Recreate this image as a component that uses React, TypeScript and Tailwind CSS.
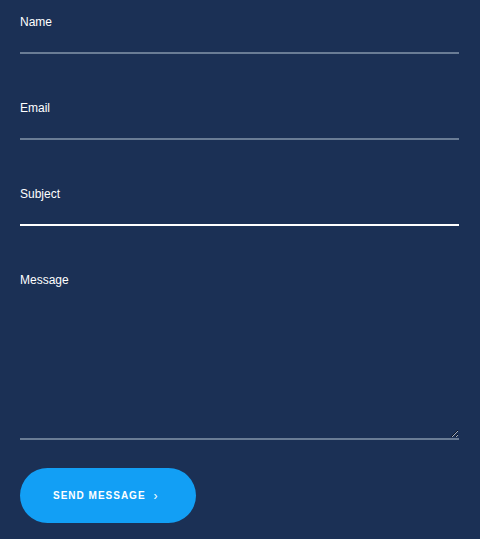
const FIELDS = ['Name', 'Email', 'Subject'];

export default function App() {
  return (
    <div className="min-h-[539px] bg-[#1b3055] px-5 pt-[14px] pb-4 font-['Liberation_Sans',Arial,sans-serif]">
      <form className="flex w-[439px] flex-col" onSubmit={(e) => e.preventDefault()}>
        {FIELDS.map((f) => (
          <label key={f} className="mb-[46px] flex flex-col">
            <span className="pt-px text-xs leading-[14px] text-white">{f}</span>
            <input
              className={
                'h-[25px] border-b-2 bg-transparent text-sm text-white outline-none ' +
                (f === 'Subject' ? 'border-white' : 'border-[#6a7c95]')
              }
            />
          </label>
        ))}
        <label className="flex flex-col">
          <span className="pt-px text-xs leading-[14px] text-white">Message</span>
          <textarea className="h-[153px] resize-y border-b-2 border-[#6a7c95] bg-transparent text-sm text-white outline-none" />
        </label>
        <button
          type="submit"
          className="mt-[28px] flex h-[55px] w-[176px] items-center rounded-full bg-[#129ff5] pl-[33px] text-[10px] font-bold tracking-[1px] text-white"
        >
          SEND MESSAGE
          <span className="ml-[8px] text-[12px] font-normal leading-none">›</span>
        </button>
      </form>
    </div>
  );
}
